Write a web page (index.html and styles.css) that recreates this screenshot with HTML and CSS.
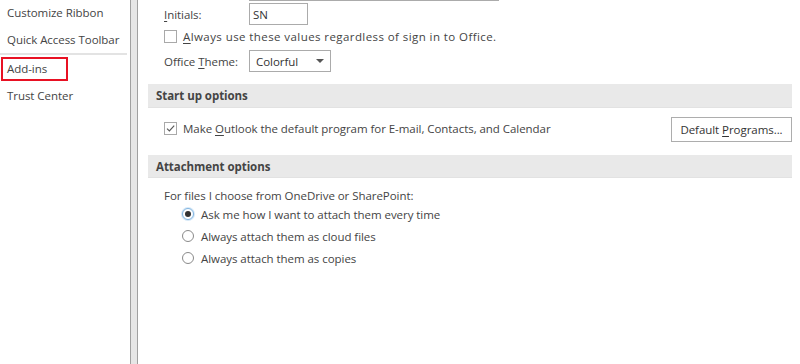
FILE: index.html
```html
<!DOCTYPE html>
<html>
<head>
<meta charset="utf-8">
<link rel="stylesheet" href="styles.css">
</head>
<body>
<div class="app">
  <nav class="sidebar">
    <div class="nav-item">Customize Ribbon</div>
    <div class="nav-item">Quick Access Toolbar</div>
    <div class="nav-sep"></div>
    <div class="nav-item selected"><span class="sel-box">Add-ins</span></div>
    <div class="nav-item">Trust Center</div>
  </nav>
  <div class="divider"></div>
  <main class="content">
    <div class="form-row row-user"><span class="label"></span><span class="textbox wide"></span></div>
    <div class="form-row row-initials"><span class="label"><u>I</u>nitials:</span><span class="textbox small">SN</span></div>
    <div class="check-row row-always"><span class="checkbox"></span><span class="always-text"><u>A</u>lways use these values regardless of sign in to Office.</span></div>
    <div class="form-row row-theme"><span class="label">Office <u>T</u>heme:</span><span class="dropdown"><span>Colorful</span><span class="arrow"></span></span></div>

    <div class="band band-startup">Start up options</div>
    <div class="startup-row">
      <div class="check-row"><span class="checkbox checked"><svg width="11" height="11" viewBox="0 0 11 11"><path d="M2 5.6 L4.4 8 L9.2 2.6" fill="none" stroke="#5a5a5a" stroke-width="1.2"/></svg></span><span>Make <u>O</u>utlook the default program for E-mail, Contacts, and Calendar</span></div>
      <span class="button"><span>Default <u>P</u>rograms...</span></span>
    </div>

    <div class="band band-attach">Attachment options</div>
    <div class="para">For files I choose from OneDrive or SharePoint:</div>
    <div class="radios">
      <div class="radio-row"><span class="radio on"><span class="dot"></span></span><span>Ask me how I want to attach them every time</span></div>
      <div class="radio-row"><span class="radio"></span><span>Always attach them as cloud files</span></div>
      <div class="radio-row"><span class="radio"></span><span>Always attach them as copies</span></div>
    </div>
  </main>
</div>
</body>
</html>
```

FILE: styles.css
```css
* { box-sizing: border-box; }
html, body { margin: 0; padding: 0; background: #fff; }
body {
  width: 800px;
  height: 364px;
  overflow: hidden;
  font-family: "Open Sans", "Noto Sans", sans-serif;
  font-size: 11.5px;
  letter-spacing: -0.05px;
  color: #444;
}
u { text-decoration: underline; text-underline-offset: 2px; text-decoration-thickness: 1px; }
.app { display: flex; height: 364px; }

.sidebar { width: 130px; flex: none; padding-top: 0; margin-top: -1px; }
.nav-item { height: 27px; display: flex; align-items: center; padding-left: 7px; white-space: nowrap; }
.nav-sep { width: 127px; height: 2px; background: #e3e3e3; }
.nav-item.selected { padding-left: 1px; }
.sel-box { display: flex; align-items: center; height: 24px; width: 67px; border: 2px solid #e81123; padding-left: 4px; }

.divider { width: 8px; flex: none; background: #e6e6e6; border-left: 1px solid #a0a0a0; border-right: 1px solid #a0a0a0; }

.content { flex: 1; padding: 0 8px 0 10px; }

.form-row { display: flex; align-items: center; height: 22px; padding-left: 16px; }
.label { width: 85px; flex: none; white-space: nowrap; }
.row-user { margin-top: -21px; }
.row-initials { margin-top: 2px; }
.textbox { height: 22px; border: 1px solid #ababab; display: flex; align-items: center; padding-left: 3px; color: #333; }
.textbox.wide { width: 250px; }
.textbox.small { width: 59px; }
.dropdown { width: 82px; height: 22px; border: 1px solid #ababab; display: flex; align-items: center; justify-content: space-between; padding: 0 6px 0 6px; color: #333; }
.arrow { width: 0; height: 0; border-left: 4px solid transparent; border-right: 4px solid transparent; border-top: 4px solid #555; }

.check-row { display: flex; align-items: center; gap: 6px; padding-left: 16px; height: 13px; white-space: nowrap; }
.row-always { margin-top: 5px; }
.always-text { letter-spacing: 0.42px; }
.row-theme { margin-top: 7px; }
.checkbox { width: 13px; height: 13px; border: 1px solid #a9a9a9; flex: none; display: flex; align-items: center; justify-content: center; background: #fff; }

.band { height: 23px; background: #e9e9e9; border-bottom: 1px solid #e2e2e2; font-weight: 700; display: flex; align-items: center; padding-left: 8px; color: #444; }
.band-startup { margin-top: 12px; height: 24px; }
.band-attach { margin-top: 13px; }

.startup-row { display: flex; align-items: center; justify-content: space-between; margin-top: 9px; height: 25px; }
.startup-row .check-row { margin-top: -2px; }
.button { width: 121px; height: 25px; border: 1px solid #adadad; display: flex; align-items: center; justify-content: center; color: #333; background: #fff; white-space: nowrap; }

.para { padding-left: 16px; margin-top: 10px; height: 16px; line-height: 16px; white-space: nowrap; }
.radios { padding-left: 34px; margin-top: -1px; }
.radio-row { display: flex; align-items: center; gap: 7px; height: 22px; white-space: nowrap; }
.radio { width: 12px; height: 12px; border-radius: 50%; border: 1px solid #8a8a8a; flex: none; display: flex; align-items: center; justify-content: center; background: #fff; }
.radio.on { border-color: #80b4e0; box-shadow: 0 0 0 1px #d6e8f7; }
.dot { width: 6px; height: 6px; border-radius: 50%; background: #333; }
```
